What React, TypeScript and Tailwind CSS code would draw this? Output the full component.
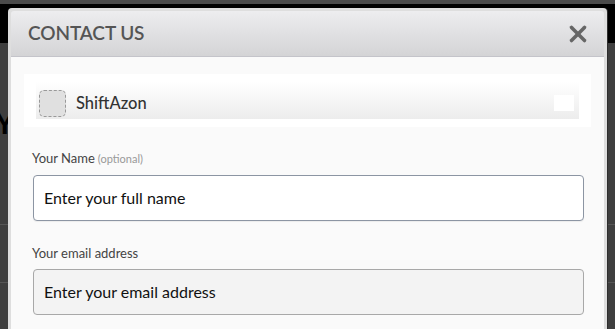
import { X } from 'lucide-react';

const font = { fontFamily: 'Lato, "Open Sans", sans-serif' };

export default function App() {
  return (
    <div className="relative w-[615px] h-[329px] overflow-hidden bg-[#3e3e3e]" style={font}>
      {/* Page behind the overlay */}
      <div className="h-[4px] bg-[#4a4a4a]" />
      <div className="h-[39px] bg-black" />
      <div className="pt-[64px] -ml-[5px] text-[30px] font-bold leading-none text-black">Y</div>
      <div className="mt-[87px] h-px bg-[#555]" />
      <div className="mt-[57px] h-px bg-[#555]" />

      {/* Modal */}
      <div className="absolute left-[8px] top-[8px] w-[599px] h-[340px] rounded-t-[4px] bg-[#dedede] p-[3px] shadow-[1px_0_0_#2e2e2e]">
        <div className="flex h-[46px] items-center justify-between rounded-t-[3px] border-b border-[#c4c4ca] bg-gradient-to-b from-[#ededef] to-[#d4d4d6] pl-[17px] pr-[13px]">
          <span className="text-[19px] font-semibold tracking-[-0.1px] text-[#555]">CONTACT US</span>
          <X className="h-[26px] w-[26px] text-[#666]" strokeWidth={3.3} />
        </div>

        <div className="h-full bg-[#fafafa] pt-[17px]">
          {/* Company selector */}
          <div className="ml-[13px] w-[567px] bg-white px-[12px] pt-[8px] pb-[8px]">
            <div className="flex h-[37px] items-end justify-between bg-gradient-to-b from-white to-[#ececec] pb-[2px] pl-[3px] pr-[5px]">
              <div className="flex items-center gap-[10px]">
                <div className="h-[27px] w-[27px] rounded-[5px] border border-dashed border-[#999] bg-[#e0e0e0]" />
                <span className="text-[16.5px] font-medium text-[#333]">ShiftAzon</span>
              </div>
              <div className="mb-[6px] h-[16px] w-[20px] bg-white" />
            </div>
          </div>

          {/* Name */}
          <div className="ml-[21px] mt-[23px] flex items-baseline gap-[3px] text-[13px] leading-[17px] text-[#444]">
            <span>Your Name</span>
            <span className="text-[11px] text-[#999]">(optional)</span>
          </div>
          <div className="ml-[22px] mt-[8px] flex h-[46px] w-[551px] items-center rounded-[4px] border border-[#8c95a3] bg-white pl-[10px] text-[16px] text-[#111] shadow-[0_1px_1px_rgba(0,0,0,0.06)]">
            Enter your full name
          </div>

          {/* Email */}
          <div className="ml-[21px] mt-[24px] text-[13px] leading-[17px] text-[#444]">Your email address</div>
          <div className="ml-[22px] mt-[7px] flex h-[46px] w-[551px] items-center rounded-[4px] border border-[#a8a8a8] bg-[#f3f3f3] pl-[10px] text-[16px] text-[#111]">
            Enter your email address
          </div>
        </div>
      </div>
    </div>
  );
}
